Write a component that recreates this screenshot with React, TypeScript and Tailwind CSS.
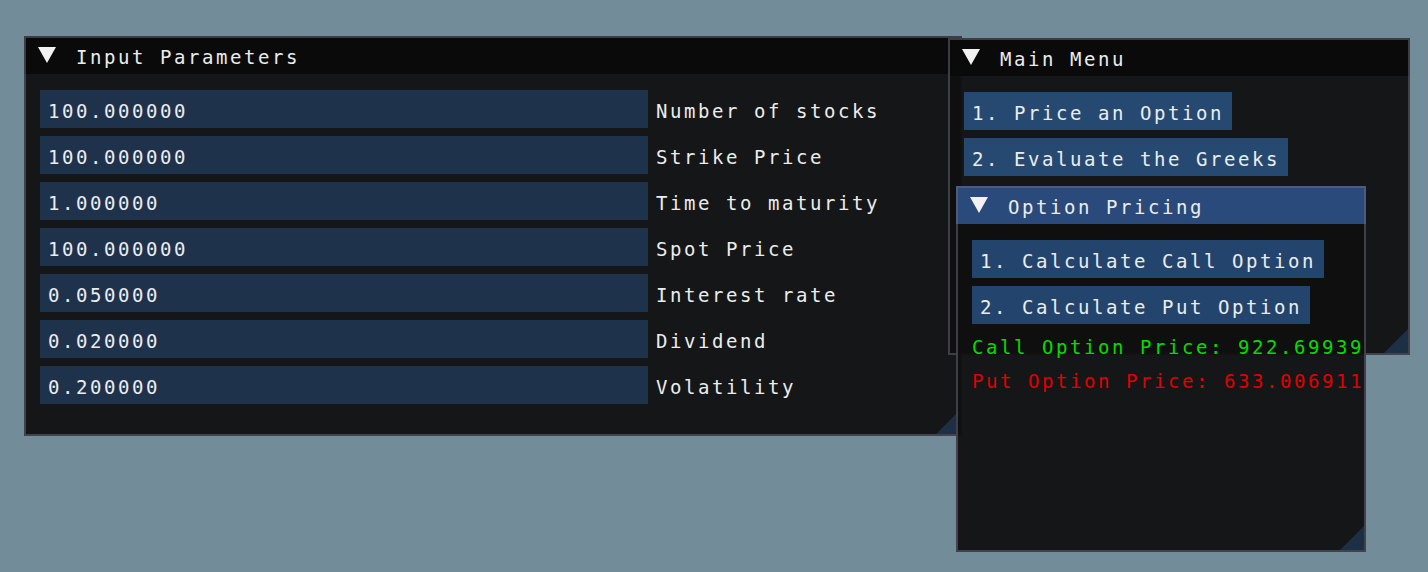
import React from "react";

const FONT = "font-['DejaVu_Sans_Mono','Liberation_Mono',monospace] text-[19px] leading-[26px] tracking-[2.56px]";
const TEXT = `${FONT} text-[#ececec]`;

const INPUTS = [
  { value: "100.000000", label: "Number of stocks" },
  { value: "100.000000", label: "Strike Price" },
  { value: "1.000000", label: "Time to maturity" },
  { value: "100.000000", label: "Spot Price" },
  { value: "0.050000", label: "Interest rate" },
  { value: "0.020000", label: "Dividend" },
  { value: "0.200000", label: "Volatility" },
];

const Arrow = () => (
  <svg width="18" height="16" viewBox="0 0 18 16" className="shrink-0">
    <polygon points="0,0 18,0 9,16" fill="#f2f2f2" />
  </svg>
);

const Grip = () => (
  <svg width="24" height="24" viewBox="0 0 24 24" className="absolute bottom-[2px] right-[2px]">
    <polygon points="24,0 24,24 0,24" fill="rgba(66,150,250,0.2)" />
  </svg>
);

type WindowProps = {
  title: string;
  active?: boolean;
  className: string;
  children: React.ReactNode;
};

// imgui-style window: title bar, padded body, resize grip, border drawn on top
const Window = ({ title, active, className, children }: WindowProps) => {
  return (
    <div className={`absolute overflow-hidden bg-[rgba(15,15,15,0.94)] ${className}`}>
      <div className={`flex h-[38px] items-center pl-[14px] ${active ? "bg-[#294a7a]" : "bg-[#0a0a0a]"}`}>
        <Arrow />
        <span className={`ml-[20px] pt-[3px] whitespace-nowrap ${TEXT}`}>{title}</span>
      </div>
      <div className="flex flex-col gap-2 px-4 pt-4 whitespace-nowrap">{children}</div>
      <Grip />
      <div className="pointer-events-none absolute inset-0 border-2 border-[rgba(110,110,128,0.5)]" />
    </div>
  );
};

const Button = ({ children }: { children: React.ReactNode }) => (
  <div className={`flex h-[38px] items-center self-start bg-[rgba(66,150,250,0.4)] px-2 pt-[3px] ${TEXT}`}>
    {children}
  </div>
);

const App = () => {
  return (
    <div className="relative h-[572px] w-[1428px] overflow-hidden bg-[#738c99]">
      <Window title="Input Parameters" className="left-[24px] top-[36px] h-[400px] w-[938px]">
        {INPUTS.map((row, i) => (
          <div key={i} className="flex items-center gap-2">
            <div className={`flex h-[38px] w-[608px] items-center bg-[rgba(41,74,122,0.54)] pl-2 pt-[3px] ${TEXT}`}>
              {row.value}
            </div>
            <span className={`pt-[3px] ${TEXT}`}>{row.label}</span>
          </div>
        ))}
      </Window>

      <Window title="Main Menu" className="left-[948px] top-[38px] h-[317px] w-[462px]">
        <Button>1. Price an Option</Button>
        <Button>2. Evaluate the Greeks</Button>
      </Window>

      <Window title="Option Pricing" active className="left-[956px] top-[186px] h-[366px] w-[410px]">
        <Button>1. Calculate Call Option</Button>
        <Button>2. Calculate Put Option</Button>
        <div className={`flex h-[26px] items-center pt-[3px] ${FONT} text-[#00dd00]`}>Call Option Price: 922.69939</div>
        <div className={`flex h-[26px] items-center pt-[3px] ${FONT} text-[#e00000]`}>Put Option Price: 633.006911</div>
      </Window>
    </div>
  );
};

export default App;
